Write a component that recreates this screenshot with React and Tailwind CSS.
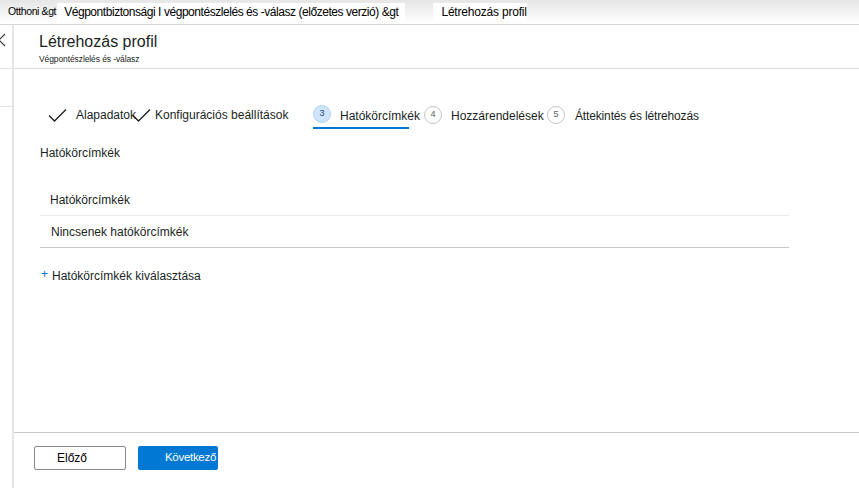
import React from 'react'

const font = { fontFamily: '"Liberation Sans", Arial, sans-serif' }

function Check() {
  return (
    <svg width="19" height="14" viewBox="0 0 19 14" fill="none" className="shrink-0">
      <path d="M1 7.5 L6.5 13 L18 1.5" stroke="#201f1e" strokeWidth="1.3" />
    </svg>
  )
}

function Num({ n, active }) {
  return (
    <span
      className={
        'flex h-[18px] w-[18px] shrink-0 items-center justify-center rounded-full text-[9px] ' +
        (active ? 'bg-[#cfe4fa] border border-[#b3d4f5] text-[#0f4a85]' : 'border border-[#c8c6c4] text-[#605e5c]')
      }
    >
      {n}
    </span>
  )
}

export default function App() {
  return (
    <div className="flex h-[488px] w-full flex-col bg-white text-[#323130]" style={font}>
      {/* breadcrumb */}
      <div className="flex h-[25px] items-center border-b border-[#d6d6d6] bg-gradient-to-b from-[#e6e6e6] to-white text-black">
        <span className="pl-[8px] text-[10.5px] tracking-[-0.4px]">Otthoni &amp;gt</span>
        <span className="ml-[1px] bg-white px-[7px] text-[12px] tracking-[-0.45px]">
          Végpontbiztonsági I végpontészlelés és -válasz (előzetes verzió) &amp;gt
        </span>
        <span className="ml-[28px] bg-white pl-[8px] text-[12px] tracking-[-0.2px]">Létrehozás profil</span>
      </div>

      <div className="flex flex-1">
        {/* left strip */}
        <div className="flex w-[14px] shrink-0 flex-col border-r-2 border-[#e6e6e6]">
          <div className="flex h-[43px] items-start pt-[8px]">
            <svg width="8" height="14" viewBox="0 0 8 14" fill="none" className="-ml-[2px]">
              <path d="M7 1 L1 7 L7 13" stroke="#323130" strokeWidth="1.1" />
            </svg>
          </div>
          <div className="h-[38px] border-t border-[#e1e1e1]" />
          <div className="border-t border-[#e1e1e1]" />
        </div>

        {/* main */}
        <div className="flex flex-1 flex-col">
          <div className="flex h-[44px] flex-col border-b border-[#dcdcdc] pl-[25px] pt-[7px]">
            <div className="text-[16px] leading-[20px] text-[#201f1e]">Létrehozás profil</div>
            <div className="mt-[3px] text-[8.5px] leading-[9px] tracking-[-0.1px] text-[#201f1e]">
              Végpontészlelés és -válasz
            </div>
          </div>

          <div className="flex-1 pl-[26px]">
            {/* steps */}
            <div className="mt-[35px] flex h-[26px] items-start pl-[8px] text-[12px] text-[#201f1e]">
              <div className="flex w-[85px] shrink-0 items-center whitespace-nowrap pt-[2px]">
                <Check />
                <span className="ml-[9px]">Alapadatok</span>
              </div>
              <div className="-ml-[1px] flex w-[182px] shrink-0 items-center whitespace-nowrap pt-[2px]">
                <Check />
                <span className="ml-[4px]">Konfigurációs beállítások</span>
              </div>
              <div className="-ml-[1px] flex h-[25px] w-[96px] shrink-0 items-center overflow-visible whitespace-nowrap border-b-2 border-[#0078d4] pb-[3px]">
                <Num n="3" active />
                <span className="ml-[9px] mt-[3px]">Hatókörcímkék</span>
              </div>
              <div className="ml-[15px] flex w-[123px] shrink-0 items-center whitespace-nowrap">
                <Num n="4" />
                <span className="ml-[9px] mt-[3px]">Hozzárendelések</span>
              </div>
              <div className="flex shrink-0 items-center whitespace-nowrap">
                <Num n="5" />
                <span className="ml-[10px] mt-[3px] tracking-[-0.15px]">Áttekintés és létrehozás</span>
              </div>
            </div>

            <div className="mt-[14px] text-[12px] text-[#201f1e]">Hatókörcímkék</div>

            {/* table */}
            <div className="mr-[70px] mt-[22px] text-[12px] text-[#201f1e]">
              <div className="flex h-[32px] items-center border-b border-[#ebebeb] pl-[10px] pt-[1px]">Hatókörcímkék</div>
              <div className="flex h-[32px] items-center border-b border-[#c8c8c8] pl-[11px] pt-[1px]">
                Nincsenek hatókörcímkék
              </div>
            </div>

            <div className="mt-[19px] flex items-center text-[12px] text-[#201f1e]">
              <span className="-mt-[4px] ml-[1px] text-[12px] leading-none text-[#0078d4]">+</span>
              <span className="ml-[4px]">Hatókörcímkék kiválasztása</span>
            </div>
          </div>

          {/* footer */}
          <div className="flex h-[56px] items-start gap-[12px] border-t border-[#c8c8c8] pl-[20px] pt-[13px]">
            <div className="flex h-[24px] w-[92px] items-center rounded-[2px] border border-[#8a8886] bg-white pl-[22px] text-[12px] text-black">
              Előző
            </div>
            <div className="flex h-[24px] w-[80px] items-center overflow-hidden whitespace-nowrap rounded-[2px] bg-[#0078d4] pl-[27px] text-[11.5px] tracking-[-0.3px] text-white">
              Következő
            </div>
          </div>
        </div>
      </div>
    </div>
  )
}
